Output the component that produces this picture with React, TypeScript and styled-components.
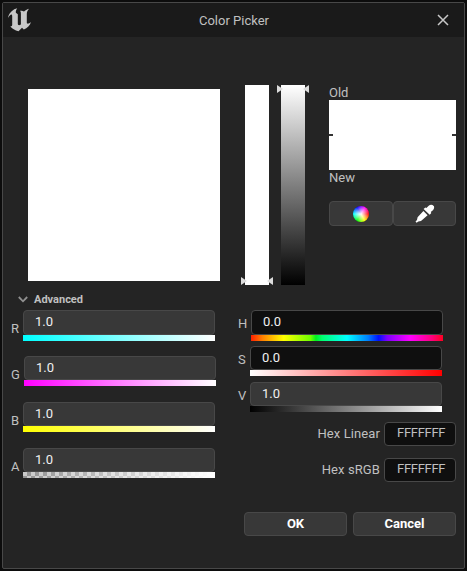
import React from "react";
import styled, { createGlobalStyle } from "styled-components";

const Global = createGlobalStyle`
  * { box-sizing: border-box; }
  body { margin: 0; background: #0c0c0c; font: 13px/16px Roboto, "Liberation Sans", sans-serif; color: #c0c0c0; }
  svg { display: block; }
`;

const Screen = styled.div`
  width: 467px;
  height: 571px;
  padding: 2px;
  overflow: hidden;
`;
const Dialog = styled.main`
  width: 463px;
  height: 567px;
  border: 1px solid #484848;
  border-radius: 2px;
  background: #242424;
`;
const TitleBar = styled.header`
  height: 34px;
  padding: 5px 15px 0 5px;
  display: grid;
  grid-template-columns: 24px 1fr 12px;
  background: #1a1a1a;
`;
const Title = styled.h1`
  margin: 5px 0 0;
  padding-right: 1px;
  text-align: center;
  font-size: 13px;
  font-weight: 400;
  line-height: 16px;
`;
const CloseButton = styled.button`
  width: 12px;
  height: 12px;
  margin-top: 6px;
  padding: 0;
  border: 0;
  background: none;
`;
const PickerRow = styled.section`
  display: flex;
  height: 251px;
  padding: 48px 0 0 25px;
`;
const Swatch = styled.div`
  width: 192px;
  height: 192px;
  margin: 4px 25px 0 0;
  background: #fff;
`;
const VerticalTrack = styled.div<{ $fill: string; $gap: number }>`
  position: relative;
  width: 24px;
  height: 200px;
  margin-right: ${(p) => p.$gap}px;
  background: ${(p) => p.$fill};
`;
const Marker = styled.svg<{ $end?: boolean }>`
  position: absolute;
  left: -4px;
  ${(p) => (p.$end ? "bottom: 0;" : "top: 0;")}
`;
const Compare = styled.div`
  width: 127px;
  line-height: 15px;
`;
const CompareBox = styled.div`
  height: 70px;
  display: flex;
  align-items: center;
  justify-content: space-between;
  background: #fff;
`;
const Tick = styled.span`
  width: 4px;
  height: 2px;
  background: #333;
`;
const ToolRow = styled.div`
  display: flex;
  margin-top: 16px;
`;
const Button = styled.button<{ $width: number }>`
  width: ${(p) => p.$width}px;
  height: ${(p) => (p.$width < 100 ? 25 : 24)}px;
  padding: 0;
  display: flex;
  align-items: center;
  justify-content: center;
  border: 1px solid #484848;
  border-radius: 4px;
  background: #383838;
  color: #fff;
  font: 700 13px/16px Roboto, sans-serif;
`;
const Wheel = styled.span`
  width: 16px;
  height: 16px;
  border-radius: 50%;
  background: radial-gradient(circle, #fff 0%, rgba(255, 255, 255, 0.6) 30%, transparent 72%),
    conic-gradient(from 90deg, #f00, #ff0, #0f0, #0ff, #00f, #f0f, #f00);
`;
const SectionHead = styled.div`
  height: 19px;
  padding: 4px 0 0 15px;
  display: flex;
  align-items: center;
  gap: 6px;
  font-size: 11px;
  font-weight: 700;
  line-height: 14px;
`;
const Channels = styled.section`
  display: grid;
  grid-template-columns: 213px 218px;
  column-gap: 14px;
  padding: 3px 0 0 8px;
`;
const Column = styled.div<{ $gap: number }>`
  display: flex;
  flex-direction: column;
  gap: ${(p) => p.$gap}px;
`;
const Channel = styled.div<{ $label: number; $tall?: boolean }>`
  display: grid;
  grid-template-columns: ${(p) => p.$label}px 192px;
  height: ${(p) => (p.$tall ? 31 : 30)}px;
  margin-bottom: ${(p) => (p.$tall ? -1 : 0)}px;
`;
const ChannelLabel = styled.label<{ $drop: number }>`
  padding-top: ${(p) => p.$drop}px;
`;
const Control = styled.div`
  display: flex;
  flex-direction: column;
`;
const Field = styled.div<{ $dark?: boolean }>`
  flex: 1;
  padding: 3px 0 0 11px;
  border: 1px solid #484848;
  border-radius: 4px;
  background: ${(p) => (p.$dark ? "#0f0f0f" : "#383838")};
  color: #f0f0f0;
`;
const Bar = styled.div<{ $fill: string }>`
  height: 6px;
  background: ${(p) => p.$fill};
`;
const HexGroup = styled.div`
  display: grid;
  gap: 12px;
  padding-top: 4px;
`;
const HexRow = styled.div`
  height: 24px;
  display: flex;
  justify-content: flex-end;
`;
const HexLabel = styled.label`
  padding: 4px 4px 0 0;
  letter-spacing: 0.1px;
`;
const HexField = styled.div`
  width: 72px;
  padding: 2px 8px 0 12px;
  border: 1px solid #484848;
  border-radius: 4px;
  background: #0f0f0f;
  letter-spacing: -0.3px;
`;
const Footer = styled.footer`
  display: flex;
  justify-content: flex-end;
  gap: 6px;
  padding: 30px 8px 0 0;
`;

const white = (from: string) => `linear-gradient(90deg, ${from}, #fff)`;
const checker =
  "linear-gradient(90deg, rgba(255,255,255,0.08), #fff), repeating-conic-gradient(#888 0 25%, #c4c4c4 0 50%) 0 0 / 8px 8px";
const hue =
  "linear-gradient(90deg, #ff2000 0%, #ff8000 6%, #ffff00 17%, #70ff00 31%, #00f020 33.8%, #00ff70 37%, #00ffff 50%, #0080ff 61%, #0010ff 66.5%, #8000ff 71%, #ff00ff 83%, #ff0080 94%, #ff0020 100%)";

type ChannelData = { name: string; value: string; fill: string; label: number; drop: number; dark?: boolean; tall?: boolean };
const rgba: ChannelData[] = [
  { name: "R", value: "1.0", fill: white("#0ff"), label: 12, drop: 11, tall: true },
  { name: "G", value: "1.0", fill: white("#f0f"), label: 13, drop: 11 },
  { name: "B", value: "1.0", fill: white("#ff0"), label: 12, drop: 11 },
  { name: "A", value: "1.0", fill: checker, label: 12, drop: 11 },
];
const hsv: ChannelData[] = [
  { name: "H", value: "0.0", fill: hue, label: 13, drop: 6, dark: true, tall: true },
  { name: "S", value: "0.0", fill: "linear-gradient(90deg, #fff, #f00)", label: 12, drop: 6, dark: true },
  { name: "V", value: "1.0", fill: "linear-gradient(90deg, #000, #fff)", label: 12, drop: 6 },
];

const ChannelList = ({ items }: { items: ChannelData[] }) => (
  <>
    {items.map((c) => (
      <Channel key={c.name} $label={c.label} $tall={c.tall}>
        <ChannelLabel $drop={c.drop}>{c.name}</ChannelLabel>
        <Control>
          <Field $dark={c.dark}>{c.value}</Field>
          <Bar $fill={c.fill} />
        </Control>
      </Channel>
    ))}
  </>
);

const Markers = ({ end }: { end?: boolean }) => (
  <Marker $end={end} width="32" height="8" viewBox="0 0 32 8">
    <path d="M0 0L6 4L0 8ZM32 0L26 4L32 8Z" fill="#dcdcdc" />
  </Marker>
);

const Logo = () => (
  <svg width="24" height="24" viewBox="0 0 24 24">
    <path
      d="M9.2 0.2C5 1.3 1 4.4 -.3 10.4C1 7.8 2.6 6.2 3.6 6.4C4.1 6.6 4.2 7.3 4.2 8.5V16.6C4.2 18.4 3.6 18.6 2.2 18C4 20.9 7 22.3 10.5 23.2L14 19.8L15.8 21.5C19.4 20 22 17.6 23 14C21.5 15.4 20 16 19.3 15.6C18.9 15.4 18.8 15.2 18.8 14.6V6C18.8 4 19.6 2.3 21 0.7C18.8 1.2 17.2 2.5 16 3.6C15 2.9 14 2.7 12 2.8C12.8 3.6 12.9 4.6 12.9 5.9V16C12.5 16.8 12.2 17.2 11.2 17.2C10.2 17.2 9.8 16.6 9.8 15.6V6.2L8.2 5C7.4 4.4 7.8 2.3 9.2 0.2Z"
      fill="#c8c8c8"
    />
  </svg>
);

const Eyedropper = () => (
  <svg width="20" height="20" viewBox="0 0 20 20" fill="#fff">
    <path d="M13.7 1.7Q15.4 .4 17.5 1L19 2.2Q19.7 4.4 18.2 6L15.8 8.1L16.3 9L14.7 10.8L8.6 5L10.4 3.5L11.4 4Z" />
    <path d="M8.4 7.1L12.6 11.3L6 17L3.4 17.6L1.6 18.8L.5 17.6L2 16L2.6 13.2Z" />
  </svg>
);

export default function App() {
  return (
    <>
      <Global />
      <Screen>
        <Dialog>
          <TitleBar>
            <Logo />
            <Title>Color Picker</Title>
            <CloseButton aria-label="Close">
              <svg width="12" height="12" viewBox="0 0 12 12" stroke="#c8c8c8" strokeWidth="1.5">
                <path d="M1 1L11 11M11 1L1 11" />
              </svg>
            </CloseButton>
          </TitleBar>
          <PickerRow>
            <Swatch />
            <VerticalTrack $fill="#fff" $gap={12}>
              <Markers end />
            </VerticalTrack>
            <VerticalTrack $fill="linear-gradient(#fff, #000)" $gap={24}>
              <Markers />
            </VerticalTrack>
            <Compare>
              <div>Old</div>
              <CompareBox>
                <Tick />
                <Tick />
              </CompareBox>
              <div>New</div>
              <ToolRow>
                <Button $width={64} aria-label="Color wheel">
                  <Wheel />
                </Button>
                <Button $width={63} aria-label="Eyedropper">
                  <Eyedropper />
                </Button>
              </ToolRow>
            </Compare>
          </PickerRow>
          <SectionHead>
            <svg width="10" height="7" viewBox="0 0 10 7" fill="none" stroke="#909090" strokeWidth="1.8">
              <path d="M.8 1L5 5.3L9.2 1" />
            </svg>
            Advanced
          </SectionHead>
          <Channels>
            <Column $gap={16}>
              <ChannelList items={rgba} />
            </Column>
            <Column $gap={6}>
              <ChannelList items={hsv} />
              <HexGroup>
                {["Hex Linear", "Hex sRGB"].map((name) => (
                  <HexRow key={name}>
                    <HexLabel>{name}</HexLabel>
                    <HexField>FFFFFFF</HexField>
                  </HexRow>
                ))}
              </HexGroup>
            </Column>
          </Channels>
          <Footer>
            <Button $width={103}>OK</Button>
            <Button $width={103}>Cancel</Button>
          </Footer>
        </Dialog>
      </Screen>
    </>
  );
}
